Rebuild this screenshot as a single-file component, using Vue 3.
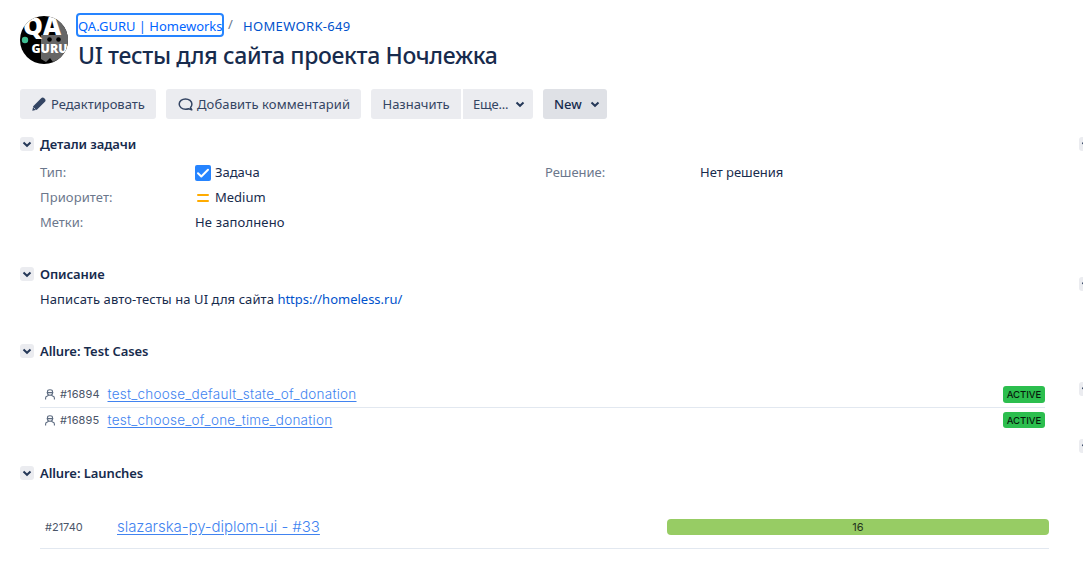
<script setup>
const tests = [
  { id: '#16894', name: 'test_choose_default_state_of_donation', cls: 'first' },
  { id: '#16895', name: 'test_choose_of_one_time_donation', cls: 'second' },
]
const chevron = 'M1.500 1.600 L5 4.800 L8.500 1.600'
</script>

<template>
  <div class="page">
    <main class="content">
      <header class="header">
        <svg class="avatar" viewBox="0 0 48 48">
          <defs><clipPath id="disc"><circle cx="24" cy="24" r="24" /></clipPath></defs>
          <g clip-path="url(#disc)">
            <rect width="48" height="48" fill="#000" />
            <path d="M21 19H48V48H40L37 44L33 46L30 42L26 46L21 43Z" fill="#666" />
            <path d="M35 0H48V24H40Z" fill="#666" />
            <circle cx="29.500" cy="23.500" r="2.300" fill="#000" />
            <circle cx="38.500" cy="23.500" r="2.300" fill="#000" />
            <circle cx="5" cy="24" r="3.200" fill="#3dbd91" />
            <text x="3" y="18.600" class="logo-big" textLength="38" lengthAdjust="spacingAndGlyphs">QA</text>
            <text x="11.500" y="37" class="logo-small" textLength="36" lengthAdjust="spacingAndGlyphs">GURU</text>
          </g>
        </svg>
        <div>
          <nav class="crumbs">
            <a class="project">QA.GURU | Homeworks</a><span class="slash">/</span><a class="issue">HOMEWORK-649</a>
          </nav>
          <h1>UI тесты для сайта проекта Ночлежка</h1>
        </div>
      </header>

      <div class="toolbar">
        <button class="edit">
          <svg width="14" height="14" viewBox="0 0 14 14"><path d="M.3 13.700L1.200 9.200L8.900 1.500Q10.600 -.2 12.300 1.200L13 1.900Q14.300 3.400 12.700 5.100L4.900 12.700Z" fill="#344563" /><path d="M1.500 10.500L3.500 12.500" stroke="#ebecf0" stroke-width=".7" /></svg>
          <span>Редактировать</span>
        </button>
        <button class="comment">
          <svg width="16" height="14" viewBox="0 0 16 14"><path d="M10.600 11.800Q9.300 12.300 7.500 12.300C4 12.300 1.200 10 1.200 7.100S4 1.900 7.500 1.900S13.900 4.200 13.900 7.100Q13.900 9.200 12.500 10.600L13.800 12.900Z" fill="none" stroke="#344563" stroke-width="1.500" stroke-linejoin="round" /></svg>
          <span>Добавить комментарий</span>
        </button>
        <div class="group">
          <button class="assign"><span>Назначить</span></button>
          <button class="more"><span>Еще...</span><svg class="arrow" viewBox="0 0 10 7"><path :d="chevron" /></svg></button>
        </div>
        <button class="status"><span>New</span><svg class="arrow" viewBox="0 0 10 7"><path :d="chevron" /></svg></button>
      </div>

      <section class="details">
        <h2><i class="toggle"><svg class="arrow" viewBox="0 0 10 7"><path :d="chevron" /></svg></i><span>Детали задачи</span></h2>
        <div class="fields">
          <label>Тип:</label>
          <div><svg class="kind" width="16" height="16" viewBox="0 0 16 16"><rect width="16" height="16" rx="2" fill="#2684ff" /><path d="M3 8.300L6.300 11.500L13 4.800" fill="none" stroke="#fff" stroke-width="2" stroke-linecap="round" stroke-linejoin="round" /></svg><span>Задача</span></div>
          <label>Решение:</label>
          <div><span>Нет решения</span></div>
          <label class="priority">Приоритет:</label>
          <div class="wide"><svg class="kind" width="16" height="16" viewBox="0 0 16 16"><path d="M3 5H13M3 11H13" stroke="#ffab00" stroke-width="2" stroke-linecap="round" /></svg><span>Medium</span></div>
          <label>Метки:</label>
          <div class="wide"><span class="empty">Не заполнено</span></div>
        </div>
      </section>

      <section class="description">
        <h2><i class="toggle"><svg class="arrow" viewBox="0 0 10 7"><path :d="chevron" /></svg></i><span>Описание</span></h2>
        <p><span class="d-text">Написать авто-тесты на UI для сайта</span> <a class="d-link">https://homeless.ru/</a></p>
      </section>

      <section class="cases">
        <h2><i class="toggle"><svg class="arrow" viewBox="0 0 10 7"><path :d="chevron" /></svg></i><span>Allure: Test Cases</span></h2>
        <div class="list">
          <div v-for="t in tests" :key="t.id" class="case" :class="t.cls">
            <svg width="10" height="11" viewBox="0 0 10 11"><path d="M2.500 2.500Q2.500 .7 5 .7T7.500 2.500V4.300Q7.500 6.300 5 6.300T2.500 4.300ZM1.700 3.600H8.300M.6 10.500V9Q.6 7.300 2.500 7L3.500 6M9.400 10.500V9Q9.400 7.300 7.500 7L6.500 6" fill="none" stroke="#5d6b80" stroke-width="1.100" /></svg>
            <span class="id">{{ t.id }}</span>
            <a>{{ t.name }}</a>
            <b>ACTIVE</b>
          </div>
        </div>
      </section>

      <section class="launches">
        <h2><i class="toggle"><svg class="arrow" viewBox="0 0 10 7"><path :d="chevron" /></svg></i><span>Allure: Launches</span></h2>
        <div class="launch">
          <span class="id">#21740</span>
          <a>slazarska-py-diplom-ui - #33</a>
          <div class="bar">16</div>
        </div>
      </section>
    </main>
    <aside>
      <i v-for="n in 4" :key="n" class="toggle"><svg class="arrow" viewBox="0 0 10 7"><path :d="chevron" /></svg></i>
    </aside>
  </div>
</template>

<style>
body { margin: 0; background: #fff; overflow: hidden; }
</style>

<style scoped>
* { box-sizing: border-box; }
.page { display: flex; height: 575px; width: 1083px; overflow: hidden; font: 13px/20px "Noto Sans", "Open Sans", sans-serif; color: #172b4d; white-space: nowrap; letter-spacing: -.02px; }
.content { width: 1049px; padding: 13px 0 0 20px; flex: none; }
.header { display: flex; height: 76px; }
.avatar { width: 48px; height: 48px; margin: 3px 8px 0 0; flex: none; }
.logo-big { font: 800 24.500px "Open Sans", sans-serif; fill: #fff; }
.logo-small { font: 800 12.500px "Open Sans", sans-serif; fill: #fff; }
.crumbs { display: flex; height: 24px; line-height: 24px; }
a { color: #0052cc; }
.project { width: 148px; height: 24px; border: 2px solid #2684ff; border-radius: 4px; line-height: 22px; color: #0065ff; letter-spacing: -.02px; }
.slash { width: 19px; padding-left: 4px; color: #6b778c; line-height: 22px; }
.issue { line-height: 26px; letter-spacing: .34px; }
h1 { margin: 4px 0 0 2px; font-size: 23px; line-height: 29px; font-weight: 500; letter-spacing: -.33px; }
.toolbar { display: flex; gap: 10px; height: 30px; }
button { height: 30px; border: 0; padding: 0; display: flex; align-items: center; background: #ebecf0; color: #344563; border-radius: 3px; font: inherit; letter-spacing: inherit; }
.edit { width: 136px; padding-left: 12px; gap: 5px; }
.comment { width: 195px; padding-left: 12px; gap: 3px; }
.comment span { letter-spacing: .11px; }
.group { display: flex; gap: 2px; }
.assign { width: 90px; padding-left: 11.500px; border-radius: 3px 0 0 3px; }
.more { width: 70px; padding: 0 8px 0 10px; justify-content: space-between; border-radius: 0 3px 3px 0; }
.more span { letter-spacing: -.2px; }
.status { width: 64px; padding: 0 7px 0 11px; justify-content: space-between; background: #dfe1e6; font-weight: 500; color: #172b4d; }
.arrow { width: 10px; height: 7px; fill: none; stroke: #253858; stroke-width: 2; }
section h2 { display: flex; align-items: center; gap: 6px; height: 20px; margin: 0; font-size: 13px; line-height: 20px; font-weight: 600; letter-spacing: -.08px; }
.toggle { display: flex; align-items: center; justify-content: center; width: 14px; height: 14px; background: #ebecf0; border-radius: 3px; flex: none; }
.details { padding-top: 15px; height: 145px; }
.fields { margin: 6px 0 0 20px; display: grid; grid-template-columns: 155px 350px 155px 1fr; grid-auto-rows: 25px; line-height: 25px; }
.fields label { color: #6b778c; }
.fields .priority { letter-spacing: .1px; }
.fields .empty { letter-spacing: .15px; }
.fields div { display: flex; align-items: center; }
.fields .wide { grid-column: 2 / 5; }
.kind { margin-right: 4px; }
.description { height: 77px; }
.description p { margin: 5px 0 0 20px; }
.d-text { letter-spacing: .08px; }
.d-link { letter-spacing: -.01px; }
.cases { height: 122px; }
.list { margin: 20px 0 0 20px; width: 1005px; font-family: Inter, sans-serif; }
.case { display: flex; align-items: center; height: 25px; padding-left: 5px; color: #4a5568; font-size: 11px; }
.first { border-bottom: 1px solid #e2e8f0; height: 27px; }
.case .id { width: 42px; margin: 0 5.500px 0 5px; letter-spacing: .12px; }
.case a, .launch a { color: #4183f0; text-decoration: underline; text-underline-offset: 2px; font-weight: 300; }
.case a { font-size: 13.500px; letter-spacing: .25px; text-decoration-skip-ink: none; }
.second a, .second .id { line-height: 18px; padding-bottom: 1px; }
.case b { margin-left: auto; width: 42px; height: 17px; border-radius: 3px; background: #2cbe4e; color: #071b0c; font-size: 9.500px; line-height: 17px; text-align: center; font-weight: 500; }
.second b { height: 16px; margin-bottom: 1px; }
.launch { margin: 23px 0 0 20px; height: 43px; border-bottom: 1px solid #e2e8f0; display: flex; align-items: center; padding-left: 5px; font: 11px/20px Inter, sans-serif; color: #4a5568; }
.launch .id { width: 72px; }
.launch a { font-size: 15px; letter-spacing: -.05px; }
.bar { margin-left: auto; width: 382px; height: 16px; border-radius: 4px; background: #97cc64; color: #24331c; line-height: 16px; text-align: center; font-size: 11px; }
aside { flex: none; width: 34px; padding: 137px 0 0 30px; overflow: hidden; display: flex; flex-direction: column; }
aside .toggle:nth-child(2) { margin-top: 126px; }
aside .toggle:nth-child(3) { margin-top: 91px; }
aside .toggle:nth-child(4) { margin-top: 43px; }
</style>
